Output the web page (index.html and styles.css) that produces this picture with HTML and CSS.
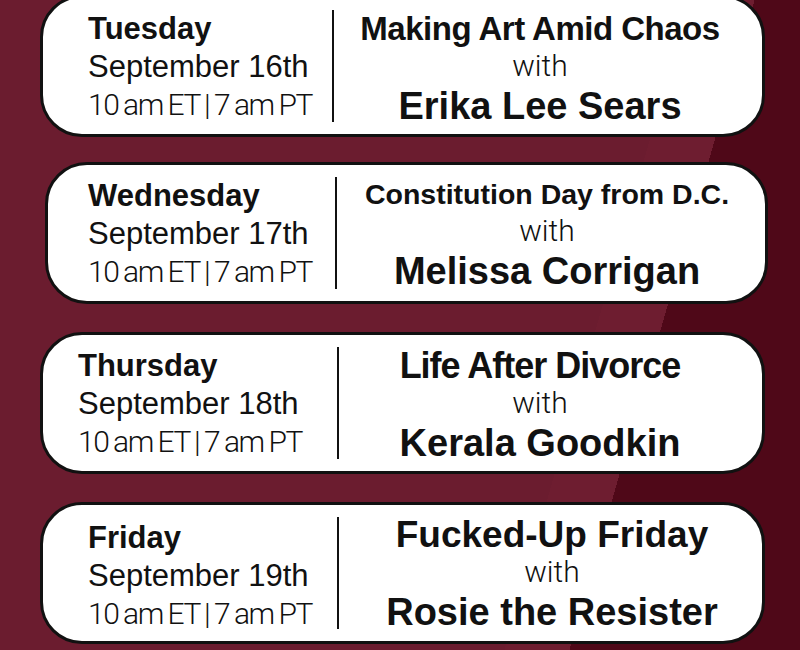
FILE: index.html
```html
<!DOCTYPE html>
<html lang="en">
<head>
<meta charset="utf-8">
<title>Schedule</title>
<link rel="stylesheet" href="styles.css">
</head>
<body>
<div class="page">
  <div class="card card--1">
    <div class="when">
      <div class="day">Tuesday</div>
      <div class="date">September 16th</div>
      <div class="time">10 am ET | 7 am PT</div>
    </div>
    <div class="divider"></div>
    <div class="what">
      <div class="title">Making Art Amid Chaos</div>
      <div class="with">with</div>
      <div class="name">Erika Lee Sears</div>
    </div>
  </div>
  <div class="card card--2">
    <div class="when">
      <div class="day">Wednesday</div>
      <div class="date">September 17th</div>
      <div class="time">10 am ET | 7 am PT</div>
    </div>
    <div class="divider"></div>
    <div class="what">
      <div class="title">Constitution Day from D.C.</div>
      <div class="with">with</div>
      <div class="name">Melissa Corrigan</div>
    </div>
  </div>
  <div class="card card--3">
    <div class="when">
      <div class="day">Thursday</div>
      <div class="date">September 18th</div>
      <div class="time">10 am ET | 7 am PT</div>
    </div>
    <div class="divider"></div>
    <div class="what">
      <div class="title">Life After Divorce</div>
      <div class="with">with</div>
      <div class="name">Kerala Goodkin</div>
    </div>
  </div>
  <div class="card card--4">
    <div class="when">
      <div class="day">Friday</div>
      <div class="date">September 19th</div>
      <div class="time">10 am ET | 7 am PT</div>
    </div>
    <div class="divider"></div>
    <div class="what">
      <div class="title">Fucked-Up Friday</div>
      <div class="with">with</div>
      <div class="name">Rosie the Resister</div>
    </div>
  </div>
</div>
</body>
</html>
```

FILE: styles.css
```css
html, body {
  margin: 0;
  padding: 0;
}

body {
  font-family: "Liberation Sans", Arial, sans-serif;
  color: #111;
  background: #6b1c2f;
}

.page {
  width: 800px;
  height: 650px;
  overflow: hidden;
  box-sizing: border-box;
  padding: 0 35px 0 40px;
  display: flex;
  flex-direction: column;
  gap: 28px;
  background: linear-gradient(105.9deg, #6b1c2f 0%, #6b1c2f 70%, #6e1d30 70%, #6e1d30 76.6%, #4f0818 76.6%, #4f0818 100%);
}

.card {
  flex-shrink: 0;
  height: 142px;
  box-sizing: border-box;
  border: 3px solid #111;
  border-radius: 42px;
  background: #fff;
  display: flex;
  align-items: stretch;
}

.card--1 { margin-top: -5px; }
.card--2 { margin-top: -3px; margin-left: 5px; margin-right: -3px; }

.when {
  box-sizing: border-box;
  flex-shrink: 0;
  display: flex;
  flex-direction: column;
  justify-content: center;
  white-space: nowrap;
  padding-top: 2px;
}

.card--1 .when { width: 289px; padding-left: 45px; }
.card--2 .when { width: 287px; padding-left: 40px; }
.card--3 .when { width: 294px; padding-left: 35px; }
.card--4 .when { width: 294px; padding-left: 45px; padding-top: 6px; }

.day {
  font-weight: 700;
  font-size: 31px;
  line-height: 38px;
}

.date {
  font-size: 31px;
  line-height: 38px;
}

.time {
  font-family: Roboto, "Liberation Sans", sans-serif;
  font-weight: 300;
  font-size: 30px;
  line-height: 38px;
  letter-spacing: -1.5px;
  word-spacing: -1px;
}

.divider {
  flex-shrink: 0;
  align-self: center;
  width: 2px;
  height: 112px;
  background: #111;
}

.what {
  flex: 1;
  min-width: 0;
  display: flex;
  flex-direction: column;
  justify-content: center;
  text-align: center;
  white-space: nowrap;
  padding-top: 6px;
}

.card--1 .what { padding-right: 16px; }
.card--2 .what { padding-right: 8px; padding-top: 2px; }
.card--3 .what { padding-right: 21px; }
.card--4 .what { padding-left: 3px; padding-top: 4px; }

.title {
  font-weight: 700;
  line-height: 38px;
}

.card--1 .title { font-size: 33px; letter-spacing: -0.5px; }
.card--2 .title { font-size: 28.5px; }
.card--3 .title { font-size: 36px; letter-spacing: -1px; }
.card--4 .title { font-size: 37px; }

.with {
  font-family: Roboto, "Liberation Sans", sans-serif;
  font-weight: 300;
  font-size: 30px;
  line-height: 36px;
}

.name {
  font-weight: 700;
  font-size: 38px;
  line-height: 44px;
}
```
